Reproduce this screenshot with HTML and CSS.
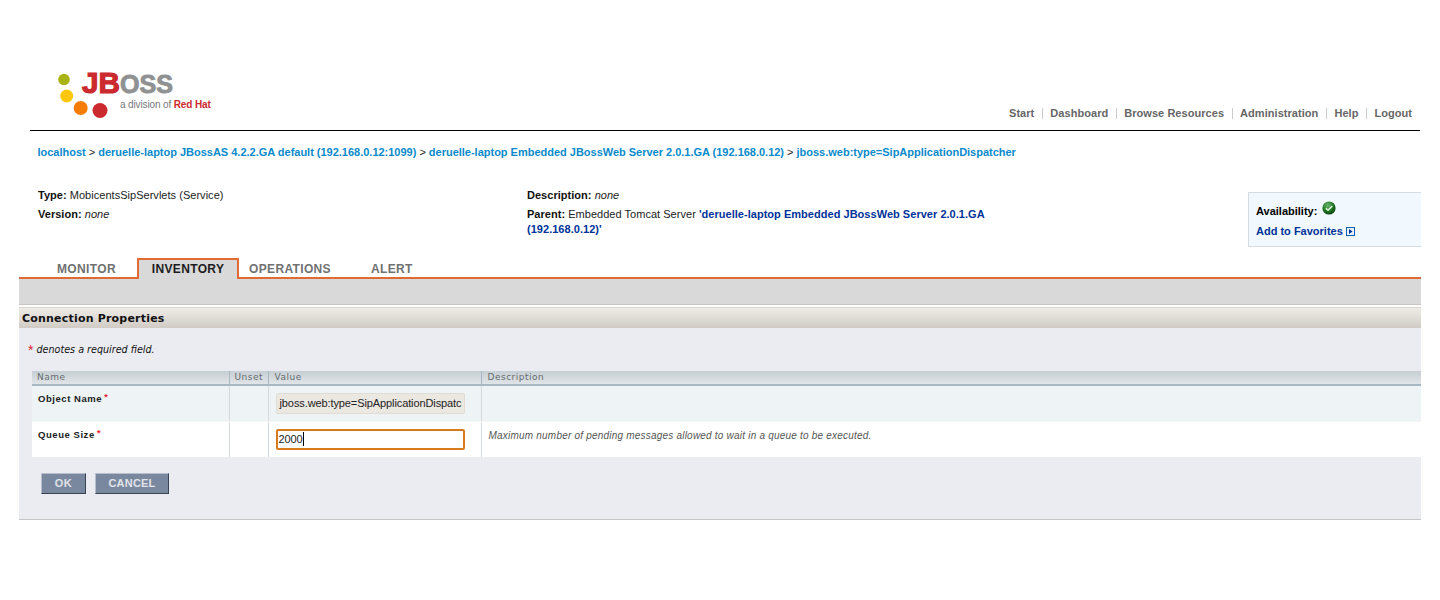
FILE: index.html
```html
<!DOCTYPE html>
<html lang="en">
<head>
<meta charset="utf-8">
<title>JBoss ON - Inventory</title>
<link rel="stylesheet" href="styles.css">
</head>
<body>
<div class="page">
  <header class="top">
    <div class="logo">
      <svg width="160" height="50" viewBox="0 0 160 50" class="logo-svg">
        <circle cx="5" cy="6.5" r="5.8" fill="#a9b310"/>
        <circle cx="7.7" cy="23" r="6.5" fill="#fcc80f"/>
        <circle cx="21.7" cy="35" r="7" fill="#f57d05"/>
        <circle cx="41" cy="37.5" r="7.5" fill="#cb2a2e"/>
        <text x="61" y="20" class="logo-oss" textLength="53" lengthAdjust="spacingAndGlyphs">OSS</text>
        <text x="23" y="20" class="logo-jb" textLength="38" lengthAdjust="spacingAndGlyphs">JB</text>
        <text x="61" y="35" class="logo-sub">a division of <tspan class="logo-rh">Red Hat</tspan></text>
      </svg>
    </div>
    <nav class="nav">
      <a>Start</a><a>Dashboard</a><a>Browse Resources</a><a>Administration</a><a>Help</a><a>Logout</a>
    </nav>
  </header>

  <div class="crumbs"><a>localhost</a> &gt; <a>deruelle-laptop JBossAS 4.2.2.GA default (192.168.0.12:1099)</a> &gt; <a>deruelle-laptop Embedded JBossWeb Server 2.0.1.GA (192.168.0.12)</a> &gt; <a>jboss.web:type=SipApplicationDispatcher</a></div>

  <section class="summary">
    <div class="sum-col sum-left">
      <p><b>Type:</b> MobicentsSipServlets (Service)</p>
      <p><b>Version:</b> <i>none</i></p>
    </div>
    <div class="sum-col sum-mid">
      <p><b>Description:</b> <i>none</i></p>
      <p><b>Parent:</b> Embedded Tomcat Server <a class="parent">'deruelle-laptop Embedded JBossWeb Server 2.0.1.GA (192.168.0.12)'</a></p>
    </div>
    <aside class="avail">
      <div class="avail-row"><b>Availability:</b>
        <svg class="ok" width="14" height="14" viewBox="0 0 14 14">
          <defs><radialGradient id="g" cx="40%" cy="30%" r="75%"><stop offset="0" stop-color="#6fb56f"/><stop offset=".55" stop-color="#1f7a22"/><stop offset="1" stop-color="#0a3d0c"/></radialGradient></defs>
          <circle cx="7" cy="7" r="6.6" fill="url(#g)"/>
          <path d="M3.8 7.2 6 9.3 10.3 4.9" fill="none" stroke="#e6f5e0" stroke-width="1.5"/>
        </svg>
      </div>
      <a class="fav">Add to Favorites
        <svg class="fav-icon" width="9" height="9" viewBox="0 0 9 9">
          <rect x=".5" y=".5" width="8" height="8" fill="#e6f2fb" stroke="#0a5fb0"/>
          <path d="M3 2 6.5 4.5 3 7z" fill="#003399"/>
        </svg>
      </a>
    </aside>
  </section>

  <div class="tabs">
    <span class="tab tab-monitor">MONITOR</span>
    <span class="tab tab-active">INVENTORY</span>
    <span class="tab tab-ops">OPERATIONS</span>
    <span class="tab tab-alert">ALERT</span>
  </div>
  <div class="subbar"></div>
  <div class="section-head">Connection Properties</div>

  <div class="panel">
    <p class="req"><span class="star">*</span> denotes a required field.</p>
    <table class="props">
      <thead>
        <tr><th class="c-name">Name</th><th class="c-unset">Unset</th><th class="c-value">Value</th><th class="c-desc">Description</th></tr>
      </thead>
      <tbody>
        <tr class="row-a">
          <td class="label">Object Name <span class="mark">*</span></td>
          <td></td>
          <td class="val"><span class="field field-ro">jboss.web:type=SipApplicationDispatc</span></td>
          <td></td>
        </tr>
        <tr class="row-b">
          <td class="label">Queue Size <span class="mark">*</span></td>
          <td></td>
          <td class="val"><span class="field field-focus">2000<span class="caret"></span></span></td>
          <td class="desc">Maximum number of pending messages allowed to wait in a queue to be executed.</td>
        </tr>
      </tbody>
    </table>
    <div class="actions">
      <button class="btn btn-ok">OK</button>
      <button class="btn btn-cancel">CANCEL</button>
    </div>
  </div>
</div>
</body>
</html>
```
FILE: styles.css
```css
* { box-sizing: border-box; }
html, body { margin: 0; padding: 0; background: #fff; }
body { font-family: "Liberation Sans", Arial, sans-serif; font-size: 11px; color: #000; }
p { margin: 0; }
.page { width: 1440px; height: 600px; overflow: hidden; }

.top { margin: 0 20px 0 30px; height: 131px; border-bottom: 1px solid #000; display: flex; justify-content: space-between; position: relative; }
.logo { padding: 73px 0 0 29px; }
.logo-svg { display: block; overflow: visible; }
.logo-jb { font: bold 29px "Liberation Sans", sans-serif; fill: #cb2a2e; stroke: #cb2a2e; stroke-width: 1.1px; }
.logo-oss { font: bold 26px "Liberation Sans", sans-serif; fill: #8f9192; stroke: #8f9192; stroke-width: .9px; }
.logo-sub { font: 10px "Liberation Sans", sans-serif; letter-spacing: -.13px; fill: #77797b; }
.logo-rh { font-weight: bold; fill: #cb2a2e; }

.nav { align-self: flex-end; display: flex; padding: 0 1px 11px 0; font-weight: bold; color: #666; line-height: 13px; letter-spacing: .05px; }
.nav a { padding: 0 7px; border-left: 1px solid #ccc; height: 11px; line-height: 11px; margin-left: 1px; }
.nav a:first-child { border-left: 0; }

.crumbs { margin: 15px 0 0 37.5px; line-height: 13px; height: 13px; color: #222; font-weight: normal; letter-spacing: -.01px; }
.crumbs a { color: #0a8acb; font-weight: bold; }

.summary { display: flex; margin: 29px 19px 0 38px; height: 70px; position: relative; }
.sum-col p { line-height: 15px; margin-bottom: 4px; letter-spacing: .03px; }
.sum-left { width: 489px; color: #222; }
.sum-mid { width: 470px; color: #222; }
.sum-col b { color: #111; }
.parent { color: #003399; font-weight: bold; }
.avail { margin: 4px 0 0 auto; width: 173px; height: 55px; background: #f1f8fe; border: 1px solid #d3dbe3; border-right: 0; padding: 9px 0 0 7px; }
.avail-row { display: flex; align-items: flex-start; height: 20px; line-height: 18px; }
.ok { margin: -1px 0 0 5px; }
.fav { color: #003399; font-weight: bold; display: flex; align-items: center; gap: 3px; line-height: 13px; margin-top: 3px; }
.fav-icon { display: block; }

.tabs { margin: 0 19px; height: 21px; border-bottom: 2px solid #e06a33; display: flex; font-size: 12px; font-weight: bold; letter-spacing: .35px; color: #717171; line-height: 22px; }
.tab { display: block; height: 21px; }
.tab-monitor { width: 118px; padding-left: 38px; }
.tab-active { width: 102px; height: 21px; border: 2px solid #e06a33; border-bottom: 0; background: #d9d9d9; color: #1c1c1c; text-align: center; line-height: 19px; position: relative; z-index: 1; }
.tab-ops { width: 132px; padding-left: 10px; }
.tab-alert { padding-left: 0; }

.subbar { margin: 0 19px; height: 26px; background: #d9d9d9; border-bottom: 1px solid #c9c5bf; }
.section-head { margin: 2px 19px 0; height: 21px; padding-left: 3px; border-top: 1px solid #d8d4cf; background: linear-gradient(#efebe6, #d0ccc5); font: bold 11px/22px "DejaVu Sans", sans-serif; letter-spacing: .2px; color: #111; }

.panel { margin: 0 19px; height: 192px; background: #ebecf1; border-bottom: 1px solid #c6c6c6; padding-top: 14px; }
.req { font: italic 9.6px/15px "DejaVu Sans", sans-serif; color: #111; padding-left: 9px; height: 29px; white-space: nowrap; }
.star { color: #d8232a; font: 14px/15px "Liberation Sans", sans-serif; vertical-align: -2px; }

.props { margin-left: 13px; width: 1389px; border-collapse: collapse; table-layout: fixed; font-size: 9px; }
.props th { height: 14px; padding: 0 0 0 5px; text-align: left; font: 9px/13px "DejaVu Sans", sans-serif; letter-spacing: .5px; color: #666b6e; background: linear-gradient(#c6ced3, #e0e4e7); border-bottom: 2px solid #a8b8c2; border-right: 1px solid #a8b8c2; }
.props th:last-child { border-right: 0; }
.props .c-value, .props .c-desc { padding-left: 6px; }
.c-name { width: 197px; }
.c-unset { width: 39px; }
.c-value { width: 213px; }
.props td { padding: 0; border-right: 1px solid #d3d9dd; vertical-align: top; }
.props td:last-child { border-right: 0; }
.row-a td { background: #eef3f6; height: 36px; border-bottom: 1px solid #f4f6f8; }
.row-b td { background: #fff; height: 36px; border-bottom: 0; }
.label { font-weight: bold; font-size: 9.5px; letter-spacing: .55px; line-height: 13px; color: #222; padding: 5px 0 0 6px !important; }
.mark { color: #e8222a; font-size: 9px; vertical-align: 2px; margin-left: -1px; }
.val { padding: 7px 0 0 7px !important; }
.field { display: block; width: 189px; height: 21px; font: 11px/19px "Liberation Sans", sans-serif; letter-spacing: -.1px; padding-left: 3px; white-space: nowrap; overflow: hidden; color: #222; border-radius: 2px; }
.field-ro { background: #ebe7e1; border: 1px solid #e2dcd4; }
.field-focus { background: #fff; border: 2px solid #d97a1c; padding-left: 1px; line-height: 17px; display: block; }
.caret { display: inline-block; width: 1px; height: 14px; background: #000; vertical-align: -3px; }
.desc { font: italic 10px/13px "Liberation Sans", sans-serif; letter-spacing: .21px; color: #555; padding: 7px 0 0 7px !important; }

.actions { display: flex; gap: 9px; padding: 16px 0 0 22px; }
.btn { height: 21px; padding: 0; background: #7a889f; color: #e0e3e8; font: bold 11px/17px "Liberation Sans", sans-serif; letter-spacing: .6px; border: 1px solid; border-color: #b9bfca #3a4356 #3a4356 #b9bfca; }
.btn-ok { width: 45px; }
.btn-cancel { width: 74px; letter-spacing: .2px; }
```
